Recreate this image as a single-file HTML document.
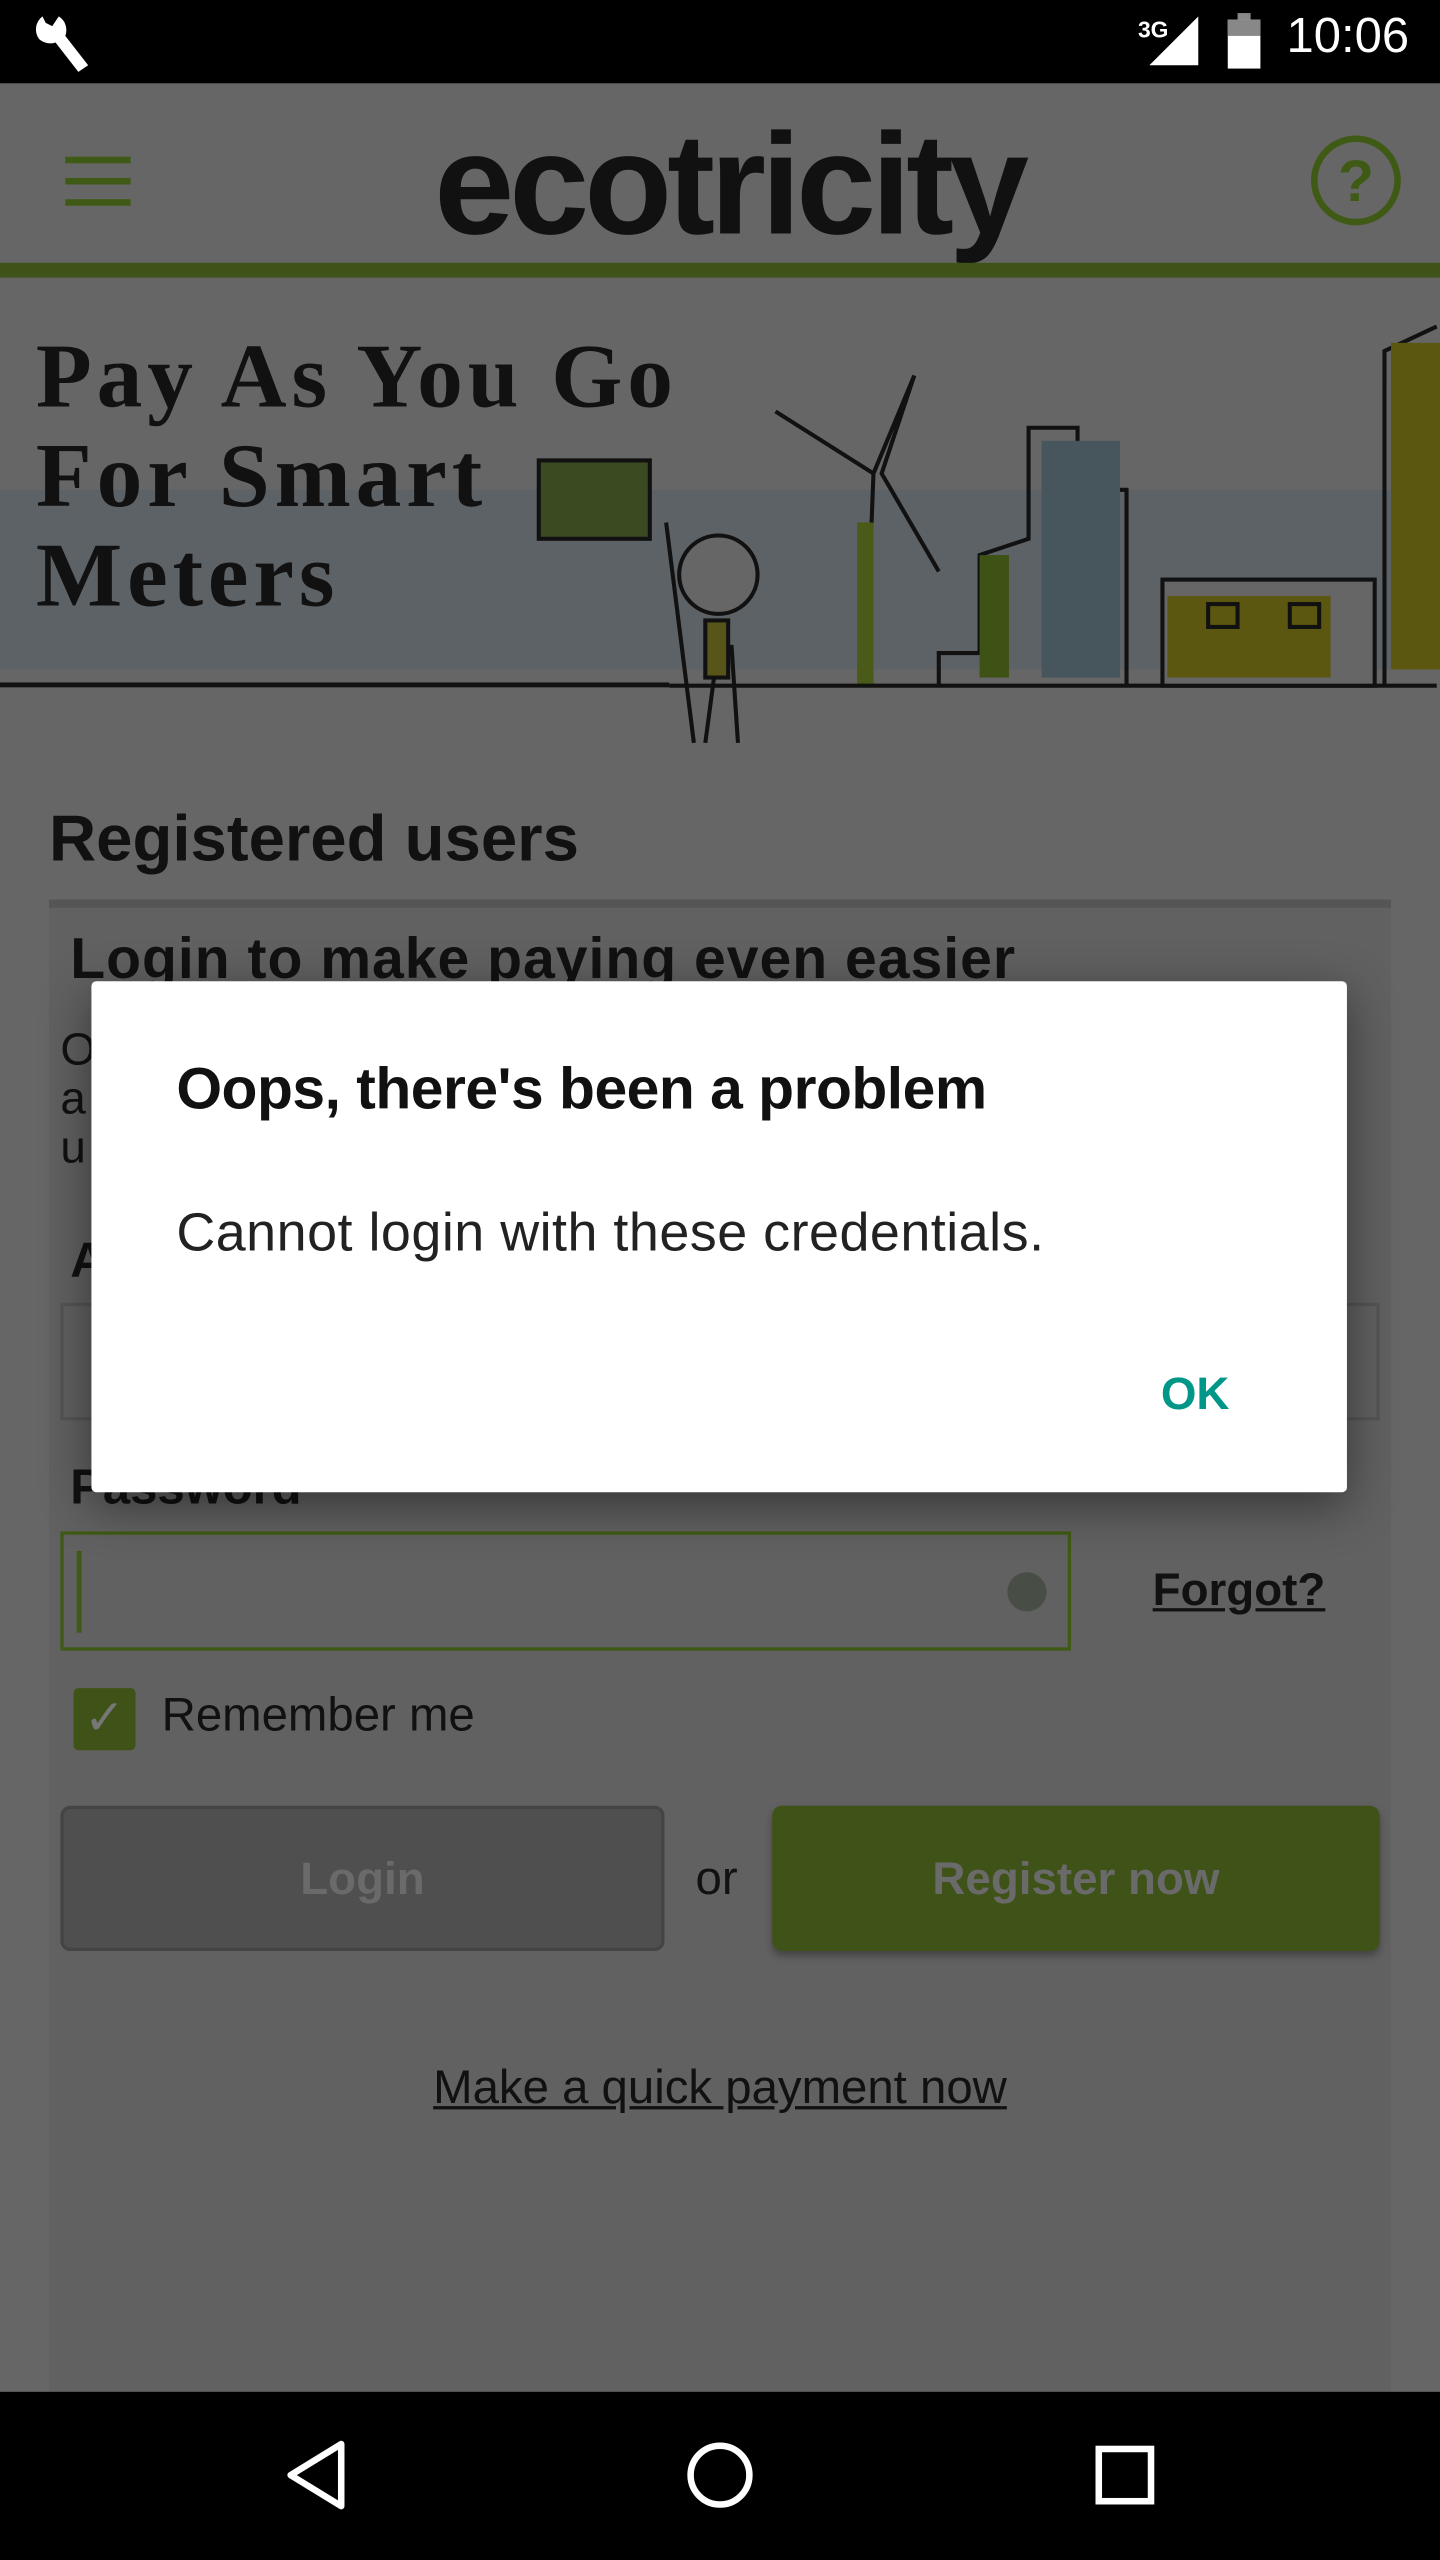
<!DOCTYPE html>
<html><head><meta charset="utf-8"><style>
html,body{margin:0;padding:0;background:#666;}
body{width:1440px;height:2560px;overflow:hidden;position:relative;font-family:"Liberation Sans","DejaVu Sans",sans-serif;}
#w{position:absolute;left:0;top:0;width:882px;height:1568px;transform:scale(1.632653);transform-origin:0 0;background:#666;}
.a{position:absolute;white-space:nowrap;}
</style></head><body><div id="w">
<div class="a" style="left:0;top:0;width:882px;height:51px;background:#000"></div>
<svg class="a" style="left:18px;top:6px" width="40" height="40" viewBox="0 0 40 40"><path d="M8 4 A10 10 0 0 0 6 18 A10 10 0 0 0 16 20 L30 38 L36 34 L22 16 A10 10 0 0 0 18 4 L14 10 L10 8 Z" fill="#fff"/></svg>
<div class="a" style="left:697px;top:10px;color:#fff;font-size:14px;font-weight:bold">3G</div>
<svg class="a" style="left:704px;top:10px" width="30" height="32"><polygon points="30,0 30,30 0,30" fill="#fff"/></svg>
<div class="a" style="left:752px;top:12px;width:20px;height:30px;background:#fff"></div>
<div class="a" style="left:752px;top:12px;width:20px;height:10px;background:#888"></div>
<div class="a" style="left:758px;top:8px;width:8px;height:4px;background:#888"></div>
<div class="a" style="left:788px;top:6px;color:#fff;font-size:30px">10:06</div>

<div class="a" style="left:40px;top:96px;width:40px;height:4px;background:#3f5a14;box-shadow:0 13px 0 #3f5a14,0 26px 0 #3f5a14"></div>
<div class="a" style="left:266px;top:62px;font-family:'Liberation Sans',sans-serif;font-weight:bold;font-size:88px;letter-spacing:-3px;color:#111">ecotricity</div>
<div class="a" style="left:803px;top:83px;width:55px;height:55px;border:4px solid #3f5a14;border-radius:50%;box-sizing:border-box;color:#3f5a14;font-weight:bold;font-size:36px;text-align:center;line-height:47px">?</div>
<div class="a" style="left:0;top:161px;width:882px;height:9px;background:#3f5218"></div>

<div class="a" style="left:0;top:300px;width:882px;height:110px;background:#5d6266"></div>
<div class="a" style="left:22px;top:201px;font-family:'Liberation Serif',serif;font-weight:bold;font-size:56px;line-height:61px;color:#111;letter-spacing:3px">Pay As You Go<br>For Smart<br>Meters</div>
<div class="a" style="left:0;top:418px;width:410px;height:3px;background:#111"></div>
<svg class="a" style="left:320px;top:190px" width="562" height="280" viewBox="320 190 562 280" fill="none" stroke="#111" stroke-width="2.5">
<rect x="330" y="282" width="68" height="48" fill="#3c4a22"/>
<path d="M408 320 L425 455 M440 395 L432 455 M448 395 L452 455"/>
<circle cx="440" cy="352" r="24" fill="#666"/>
<rect x="432" y="380" width="14" height="35" fill="#58551a"/>
<path d="M475 252 L535 290 L560 230 L540 290 L575 350 M535 290 L530 420"/>
<rect x="525" y="320" width="10" height="100" fill="#4a5a18" stroke="none"/>
<path d="M410 420 L880 420"/>
<path d="M575 420 L575 400 L600 400 L600 340 L630 330 L630 262 L660 262 L660 300 L690 300 L690 420"/>
<rect x="600" y="340" width="18" height="75" fill="#3e5216" stroke="none"/>
<rect x="638" y="270" width="48" height="145" fill="#47565d" stroke="none"/>
<rect x="712" y="355" width="130" height="65" fill="#666"/>
<rect x="715" y="365" width="100" height="50" fill="#5c5710" stroke="none"/>
<rect x="740" y="370" width="18" height="14"/><rect x="790" y="370" width="18" height="14"/>
<path d="M848 420 L848 215 L880 200"/>
<rect x="852" y="210" width="30" height="200" fill="#5c5710" stroke="none"/>
</svg>

<div class="a" style="left:30px;top:492px;font-size:40px;font-weight:bold;color:#111;letter-spacing:0px">Registered users</div>
<div class="a" style="left:30px;top:551px;width:822px;height:914px;background:#616161;border-top:5px solid #555"></div>
<div class="a" style="left:43px;top:568px;font-size:35px;font-weight:bold;color:#111;letter-spacing:0.6px">Login to make paying even easier</div>
<div class="a" style="left:37px;top:628px;font-size:28px;line-height:30px;color:#111">O<br>a<br>u</div>
<div class="a" style="left:43px;top:756px;font-size:30px;font-weight:bold;color:#111">A</div>
<div class="a" style="left:37px;top:798px;width:808px;height:72px;border:2px solid #555;box-sizing:border-box"></div>
<div class="a" style="left:43px;top:895px;font-size:30px;font-weight:bold;color:#111">Password</div>
<div class="a" style="left:37px;top:938px;width:619px;height:73px;border:2px solid #3f5a14;box-sizing:border-box"></div>
<div class="a" style="left:47px;top:950px;width:3px;height:50px;background:#3f5a14"></div>
<div class="a" style="left:617px;top:963px;width:24px;height:24px;border-radius:50%;background:#484d45"></div>
<div class="a" style="left:706px;top:958px;font-size:28px;font-weight:bold;color:#111;text-decoration:underline">Forgot?</div>
<div class="a" style="left:45px;top:1034px;width:38px;height:38px;border-radius:3px;background:#3f5218;color:#777;font-size:30px;text-align:center;line-height:38px">✓</div>
<div class="a" style="left:99px;top:1035px;font-size:29px;color:#111">Remember me</div>
<div class="a" style="left:37px;top:1106px;width:370px;height:89px;border:2px solid #444;border-radius:6px;box-sizing:border-box;background:#4f4f4f;color:#6a6a6a;font-size:28px;font-weight:bold;text-align:center;line-height:85px">Login</div>
<div class="a" style="left:426px;top:1135px;font-size:29px;color:#111">or</div>
<div class="a" style="left:473px;top:1106px;width:372px;height:89px;border-radius:6px;background:#3f5218;color:#6a6a6a;font-size:28px;font-weight:bold;text-align:center;line-height:89px;box-shadow:0 3px 5px rgba(0,0,0,.3)">Register now</div>
<div class="a" style="left:0;top:1263px;width:882px;text-align:center;font-size:29px;color:#111;text-decoration:underline">Make a quick payment now</div>

<div class="a" style="left:56px;top:601px;width:769px;height:313px;background:#fff;border-radius:3px;box-shadow:0 8px 30px rgba(0,0,0,.45)"></div>
<div class="a" style="left:108px;top:646px;font-size:36px;font-weight:bold;color:#111;letter-spacing:-0.3px">Oops, there's been a problem</div>
<div class="a" style="left:108px;top:736px;font-size:33px;color:#222;letter-spacing:0.3px">Cannot login with these credentials.</div>
<div class="a" style="left:711px;top:838px;font-size:28px;font-weight:bold;color:#009688">OK</div>

<div class="a" style="left:0;top:1465px;width:882px;height:103px;background:#000"></div>
<svg class="a" style="left:0;top:1465px" width="882" height="103"><g fill="none" stroke="#fff" stroke-width="4"><polygon points="209,32 209,70 178,51" stroke-linejoin="round"/><circle cx="441" cy="51" r="18"/><rect x="673" y="35" width="32" height="32"/></g></svg>
</div></body></html>
